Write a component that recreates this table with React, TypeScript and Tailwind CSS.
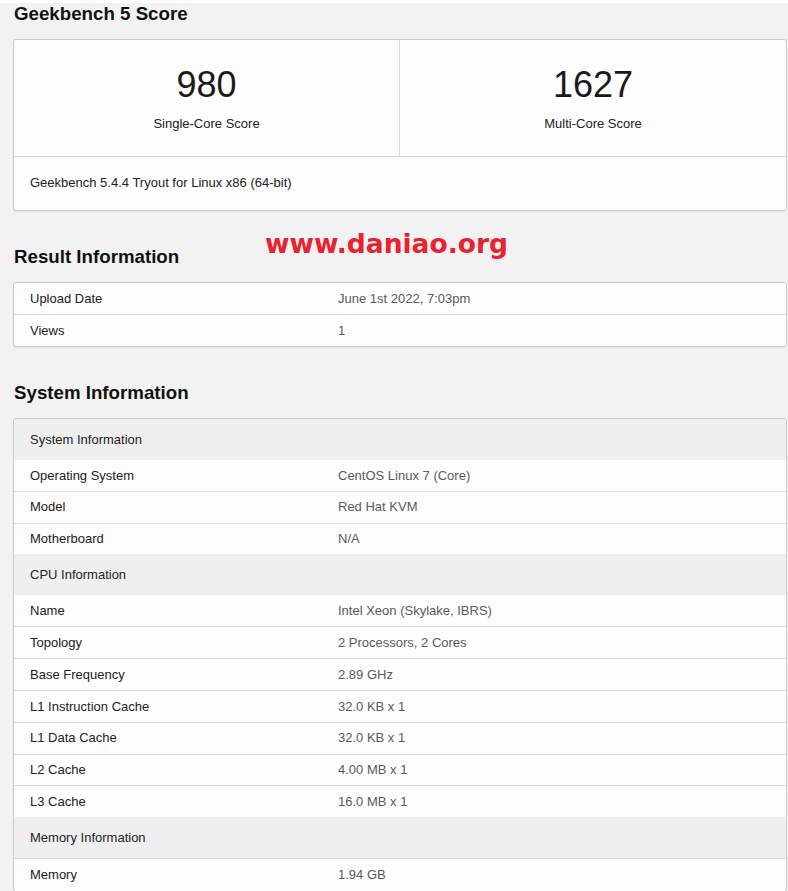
import React from 'react'

type Row = { label: string; value?: string; header?: boolean }

const resultRows: Row[] = [
    { label: 'Upload Date', value: 'June 1st 2022, 7:03pm' },
    { label: 'Views', value: '1' },
]

const systemRows: Row[] = [
    { label: 'System Information', header: true },
    { label: 'Operating System', value: 'CentOS Linux 7 (Core)' },
    { label: 'Model', value: 'Red Hat KVM' },
    { label: 'Motherboard', value: 'N/A' },
    { label: 'CPU Information', header: true },
    { label: 'Name', value: 'Intel Xeon (Skylake, IBRS)' },
    { label: 'Topology', value: '2 Processors, 2 Cores' },
    { label: 'Base Frequency', value: '2.89 GHz' },
    { label: 'L1 Instruction Cache', value: '32.0 KB x 1' },
    { label: 'L1 Data Cache', value: '32.0 KB x 1' },
    { label: 'L2 Cache', value: '4.00 MB x 1' },
    { label: 'L3 Cache', value: '16.0 MB x 1' },
    { label: 'Memory Information', header: true },
    { label: 'Memory', value: '1.94 GB' },
]

function SectionTitle({ children, first }: { children: React.ReactNode; first?: boolean }) {
    return (
        <h3
            className={
                first
                    ? 'mt-[3px] mb-[14px] pl-[14px] text-[18.72px] leading-[22px] font-bold text-[#111]'
                    : 'mt-[35px] mb-[14px] pl-[14px] text-[18.72px] leading-[22px] font-bold text-[#111]'
            }
        >
            {children}
        </h3>
    )
}

function Card({ children }: { children: React.ReactNode }) {
    return (
        <div className="ml-[13px] w-[774px] bg-[#fdfdfd] border border-[#cacaca] rounded-[3px] shadow-[0_1px_1px_rgba(0,0,0,0.06)] overflow-hidden">
            {children}
        </div>
    )
}

function InfoTable({ rows }: { rows: Row[] }) {
    return (
        <div>
            {rows.map((row, i) => {
                const prev = rows[i - 1]
                const isMemory = row.label === 'Memory'
                // 標題列之後的第一列不畫分隔線（最後的 Memory 例外）
                const divider = (i > 0 && !prev?.header) || isMemory
                if (row.header) {
                    return (
                        <div key={row.label} className="h-[41px] flex items-center px-4 bg-[#efefef] text-[13px] text-[#222]">
                            {row.label}
                        </div>
                    )
                }
                let cls = 'grid grid-cols-[308px_1fr] h-[31px] items-center text-[13px]'
                if (isMemory) cls = 'grid grid-cols-[308px_1fr] h-[33px] items-center border-t border-[#dedede] text-[13px]'
                else if (divider) cls = 'grid grid-cols-[308px_1fr] h-[31.8px] items-center border-t border-[#dedede] text-[13px]'
                return (
                    <div key={row.label} className={cls}>
                        <span className="px-4 text-[#222]">{row.label}</span>
                        <span className="px-4 text-[#5a5a5a]">{row.value}</span>
                    </div>
                )
            })}
        </div>
    )
}

export default function App() {
    return (
        <div className="relative min-h-[891px] bg-[#f2f2f2] font-['Liberation_Sans',Arial,sans-serif] pb-4">
            <SectionTitle first>Geekbench 5 Score</SectionTitle>
            <Card>
                <div className="grid grid-cols-2 border-b border-[#d6d6d6]">
                    <div className="flex flex-col items-center pt-[25px] pb-[23px] border-r border-[#d6d6d6]">
                        <span className="text-[36px] leading-[40px] text-[#1a1a1a]">980</span>
                        <span className="mt-[10px] text-[13px] leading-[18px] text-[#222]">Single-Core Score</span>
                    </div>
                    <div className="flex flex-col items-center pt-[25px] pb-[23px]">
                        <span className="text-[36px] leading-[40px] text-[#1a1a1a]">1627</span>
                        <span className="mt-[10px] text-[13px] leading-[18px] text-[#222]">Multi-Core Score</span>
                    </div>
                </div>
                <div className="px-4 pt-[17px] pb-[18px] text-[13px] leading-[18px] text-[#222]">
                    Geekbench 5.4.4 Tryout for Linux x86 (64-bit)
                </div>
            </Card>

            <SectionTitle>Result Information</SectionTitle>
            <Card>
                <InfoTable rows={resultRows} />
            </Card>

            <SectionTitle>System Information</SectionTitle>
            <Card>
                <InfoTable rows={systemRows} />
            </Card>

            {/* 浮水印 */}
            <div className="absolute left-[265px] top-[225px] font-['DejaVu_Sans',sans-serif] font-bold text-[26.5px] leading-[32px] text-[#e8222e]">
                www.daniao.org
            </div>
        </div>
    )
}
